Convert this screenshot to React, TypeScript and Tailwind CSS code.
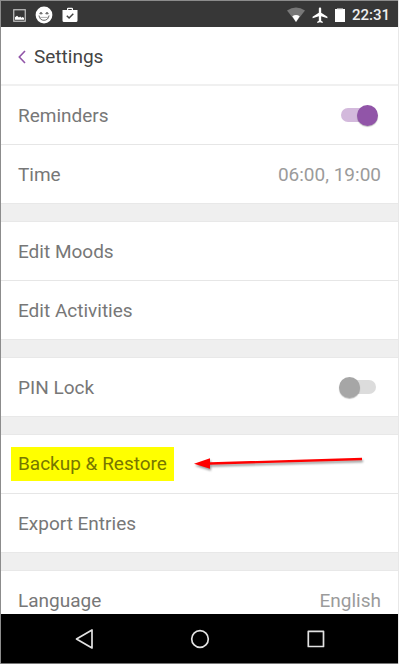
import { useState } from "react";
import type { ReactNode } from "react";

const rowClass =
  "flex h-[58px] w-full items-center justify-between px-[17px] text-left text-[19px] leading-6 text-[#777777]";

function Group({ children }: { children: ReactNode }) {
  return (
    <section className="divide-y divide-[#e6e6e6] bg-white shadow-[0_0_0_1px_#e8e8e8]">
      {children}
    </section>
  );
}

function LinkRow({ label, value }: { label: string; value?: string }) {
  return (
    <div>
      <button type="button" className={rowClass}>
        <span className="pt-0.5">{label}</span>
        {value && <span className="pt-0.5 text-[#9b9b9b]">{value}</span>}
      </button>
    </div>
  );
}

function SwitchRow({ label, initial }: { label: string; initial: boolean }) {
  const [on, setOn] = useState(initial);

  return (
    <div>
      <label className={rowClass}>
        <span className="pt-0.5">{label}</span>
        <input
          type="checkbox"
          role="switch"
          checked={on}
          onChange={(e) => setOn(e.target.checked)}
          className="peer sr-only"
        />
        <span className="mr-[5px] flex h-[14px] w-[35px] items-center rounded-full bg-[#dcdcdc] peer-checked:justify-end peer-checked:bg-[#d3b9dc] peer-focus-visible:outline-2">
          <span
            className={
              on
                ? "-mr-[2px] size-[21px] shrink-0 rounded-full bg-[#9155a8] shadow-[0_1px_1px_rgba(0,0,0,0.25)]"
                : "-ml-[2px] size-[21px] shrink-0 rounded-full bg-[#a6a6a6] shadow-[0_1px_1px_rgba(0,0,0,0.25)]"
            }
          />
        </span>
      </label>
    </div>
  );
}

function StatusBar() {
  return (
    <div className="flex h-[27px] shrink-0 items-center justify-between border-t border-[#8c8c8c] bg-[#373737] pt-0.5 pr-2 pl-3 text-white">
      <div className="flex items-center gap-[9px]">
        <svg viewBox="0 0 13 13" className="h-[13px] w-[13px]">
          <rect x="0.75" y="0.75" width="11.5" height="11.5" fill="none" stroke="#c4c4c4" strokeWidth="1.2" />
          <path d="M2 10.8V8.2L4 6.8l2 1.6 1.2-.8 1.2 1.2 1.4-.7 1.2 1v1.7z" fill="#fff" />
        </svg>
        <svg viewBox="0 0 18 18" className="h-[18px] w-[18px]">
          <circle cx="9" cy="9" r="8.4" fill="#fff" />
          <g fill="none" stroke="#666" strokeWidth="1">
            <path d="M4.800 7.800a1.200 1.200 0 0 1 2.400 0zM10.800 7.800a1.200 1.200 0 0 1 2.400 0z" fill="#999" />
            <path d="M4 9.500c.3 3.200 2.400 4.800 5 4.800s4.700-1.600 5-4.800" />
            <path d="M4.800 11.400h8.400" stroke="#999" strokeWidth="0.8" />
          </g>
        </svg>
        <svg viewBox="0 0 16 16" className="h-4 w-4">
          <path d="M5 3V1.800Q5 .7 6.100 .7h3.800Q11 .7 11 1.800V3h4.500v10.500q0 1.500-1.500 1.500H2Q.5 15 .5 13.500V3zm1.200 0h3.600V1.900H6.200z" fill="#fff" fillRule="evenodd" />
          <path d="m4.800 8.700 2.300 2.300 4.200-4.200" fill="none" stroke="#444" strokeWidth="1.500" />
        </svg>
      </div>
      <div className="flex items-center gap-[7px]">
        <svg viewBox="0 0 18 16" className="h-4 w-[18px]">
          <path d="M0 3.500Q9-2.500 18 3.500L9 15z" fill="#777" />
          <path d="M5.300 9.200Q9 7 12.700 9.200L9 15z" fill="#fff" />
        </svg>
        <svg viewBox="1.500 1.500 20 20.500" className="h-4 w-4">
          <path d="M21 16v-2l-8-5V3.500c0-.83-.67-1.500-1.500-1.500S10 2.670 10 3.500V9l-8 5v2l8-2.500V19l-2 1.500V22l3.500-1 3.500 1v-1.500L13 19v-5.500z" fill="#fff" />
        </svg>
        <svg viewBox="3 0 10 16" className="h-4 w-[10px]">
          <path d="M5.500 1h5v1H13v13H3V2h2.500z" fill="#fff" />
          <path d="M5.500 1h5v1.200h-5z" fill="#999" />
        </svg>
        <span className="text-[15px] leading-5 font-medium text-[#eeeeee]">22:31</span>
      </div>
    </div>
  );
}

function NavBar() {
  return (
    <nav className="flex h-[50px] shrink-0 items-center justify-center gap-[92px] border-b border-[#777777] bg-black">
      <button type="button" aria-label="Back">
        <svg viewBox="0 0 24 24" className="size-6" fill="none" stroke="#e2e2e2" strokeWidth="1.700" strokeLinejoin="round">
          <path d="M4.500 12 20 3v18z" />
        </svg>
      </button>
      <button type="button" aria-label="Home">
        <svg viewBox="0 0 24 24" className="size-6" fill="none" stroke="#e2e2e2" strokeWidth="1.700">
          <circle cx="12" cy="12" r="8.300" />
        </svg>
      </button>
      <button type="button" aria-label="Recent apps">
        <svg viewBox="0 0 24 24" className="size-6" fill="none" stroke="#e2e2e2" strokeWidth="1.700" strokeLinejoin="round">
          <rect x="4.300" y="4.300" width="15.200" height="15.200" />
        </svg>
      </button>
    </nav>
  );
}

function Arrow() {
  return (
    <svg
      viewBox="0 0 172 16"
      className="pointer-events-none absolute top-5 left-[192px] h-4 w-[172px] overflow-visible drop-shadow-[1px_2px_1px_rgba(0,0,0,0.4)]"
    >
      <path d="M1 8.700 17 3.200v4.100L169 2.800v2.400L17 9.700V13.800z" fill="#f00" />
    </svg>
  );
}

export default function App() {
  return (
    <div className="h-screen bg-white pr-px pb-px font-['Roboto',sans-serif]">
      <div className="flex h-full flex-col border-r border-l border-r-[#e8e8e8] border-l-[#8c8c8c] bg-[#efefef]">
        <StatusBar />
        <header className="flex h-[59px] shrink-0 items-center gap-2 border-b-2 border-[#f0f0f0] bg-white px-[17px] pt-0.5">
          <button type="button" aria-label="Back">
            <svg viewBox="0 0 8 14" className="h-[14px] w-2" fill="none" stroke="#9155a8" strokeWidth="1.600">
              <path d="M7 1 1.300 7 7 13" />
            </svg>
          </button>
          <h1 className="text-[19px] leading-6 text-[#444444]">Settings</h1>
        </header>
        <main className="flex min-h-0 flex-1 flex-col gap-[19px] overflow-y-auto [scrollbar-width:none] *:shrink-0">
          <Group>
            <SwitchRow label="Reminders" initial={true} />
            <LinkRow label="Time" value="06:00, 19:00" />
          </Group>
          <Group>
            <LinkRow label="Edit Moods" />
            <LinkRow label="Edit Activities" />
          </Group>
          <Group>
            <SwitchRow label="PIN Lock" initial={false} />
          </Group>
          <Group>
            <div className="relative">
              <button type="button" className={rowClass}>
                <mark className="-mx-[7px] bg-[#ffff00] px-[7px] py-[5px] text-[#777700]">
                  Backup &amp; Restore
                </mark>
              </button>
              <Arrow />
            </div>
            <LinkRow label="Export Entries" />
          </Group>
          <Group>
            <LinkRow label="Language" value="English" />
          </Group>
        </main>
        <NavBar />
      </div>
    </div>
  );
}
